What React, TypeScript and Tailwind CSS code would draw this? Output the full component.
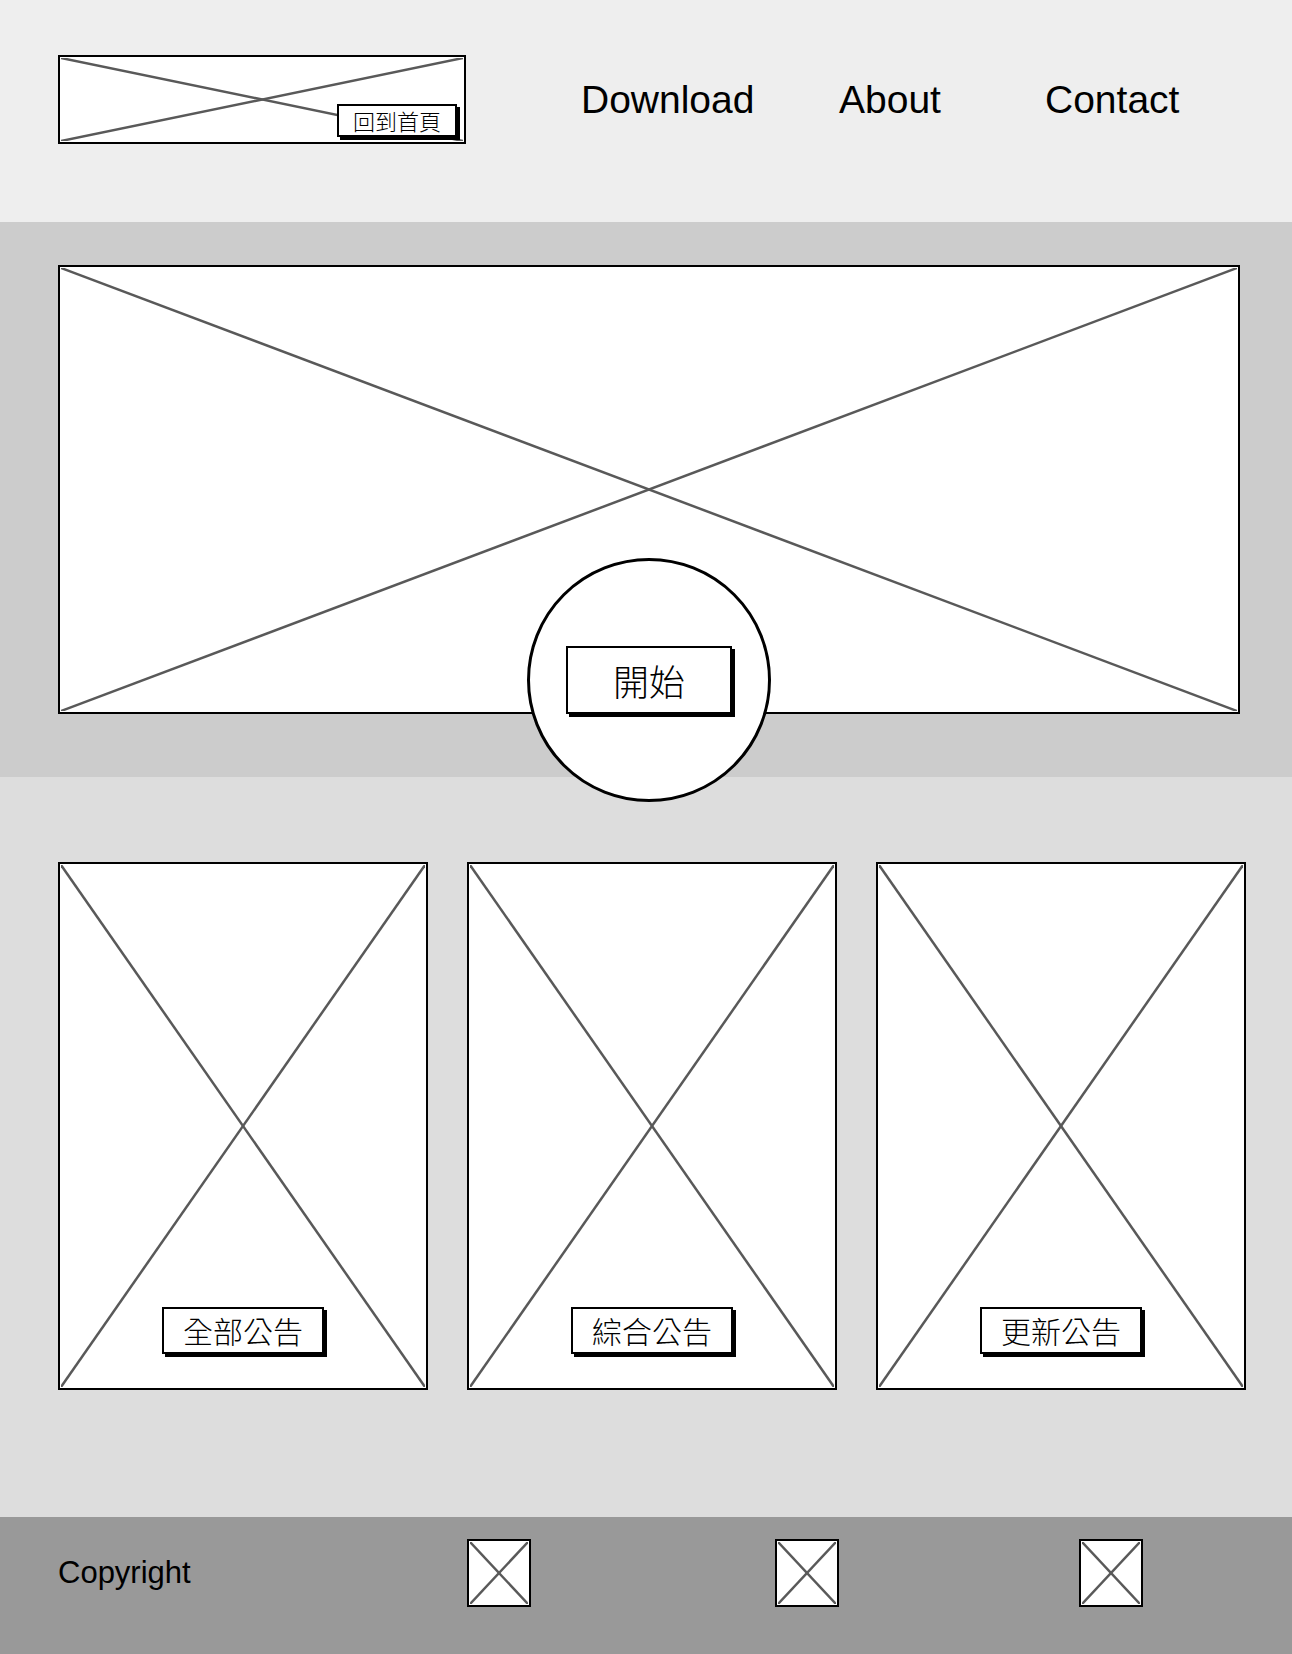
const cjk = { fontFamily: '"Noto Sans CJK TC", "Noto Sans CJK SC", sans-serif' };

function Cross({ className = "" }: { className?: string }) {
  return (
    <svg className={"absolute inset-[1px] h-[calc(100%-2px)] w-[calc(100%-2px)] " + className}>
      <line x1="0" y1="0" x2="100%" y2="100%" stroke="#595959" strokeWidth="2.5" />
      <line x1="100%" y1="0" x2="0" y2="100%" stroke="#595959" strokeWidth="2.5" />
    </svg>
  );
}

function Tag({ text, className = "" }: { text: string; className?: string }) {
  return (
    <div
      className={
        "relative flex items-center justify-center border-2 border-black bg-white font-light text-black shadow-[3px_3px_0_#000] " +
        className
      }
      style={cjk}
    >
      {text}
    </div>
  );
}

function Card({ label }: { label: string }) {
  return (
    <div className="relative flex h-[528px] w-[370px] items-end justify-center border-2 border-black bg-white pb-[34px]">
      <Cross />
      <Tag text={label} className="h-[47px] w-[162px] text-[30px]" />
    </div>
  );
}

function FooterIcon() {
  return (
    <div className="relative h-[68px] w-[64px] border-2 border-black bg-white">
      <Cross />
    </div>
  );
}

export default function App() {
  return (
    <div className="w-[1292px] min-h-[1654px]" style={{ fontFamily: '"Liberation Sans", Arial, sans-serif' }}>
      {/* Header */}
      <header className="flex h-[222px] items-start bg-[#eeeeee] pl-[58px] pt-[55px]">
        <div className="relative h-[89px] w-[408px] border-2 border-black bg-white">
          <Cross />
          <div className="absolute bottom-[5px] right-[7px]">
            <Tag text="回到首頁" className="h-[33px] w-[120px] text-[22px]" />
          </div>
        </div>
        <nav className="ml-[115px] flex h-[89px] items-center text-[39px] leading-none text-black">
          <span className="w-[258px]">Download</span>
          <span className="w-[206px]">About</span>
          <span>Contact</span>
        </nav>
      </header>

      {/* Hero */}
      <section className="bg-[#cccccc] pb-[63px] pl-[58px] pr-[52px] pt-[43px]">
        <div className="relative h-[449px] w-[1182px] border-2 border-black bg-white">
          <Cross />
          <div className="absolute left-1/2 top-[291px] z-10 flex h-[244px] w-[244px] -translate-x-1/2 items-center justify-center rounded-full border-[3px] border-black bg-white">
            <Tag text="開始" className="h-[68px] w-[166px] text-[36px]" />
          </div>
        </div>
      </section>

      {/* Announcements */}
      <section className="flex gap-[39px] bg-[#dddddd] pb-[127px] pl-[58px] pt-[85px]">
        <Card label="全部公告" />
        <Card label="綜合公告" />
        <Card label="更新公告" />
      </section>

      {/* Footer */}
      <footer className="flex h-[137px] items-start bg-[#999999] pl-[58px] pt-[22px]">
        <span className="mt-[18px] w-[409px] text-[31px] leading-none text-black">Copyright</span>
        <FooterIcon />
        <div className="ml-[244px]">
          <FooterIcon />
        </div>
        <div className="ml-[240px]">
          <FooterIcon />
        </div>
      </footer>
    </div>
  );
}
